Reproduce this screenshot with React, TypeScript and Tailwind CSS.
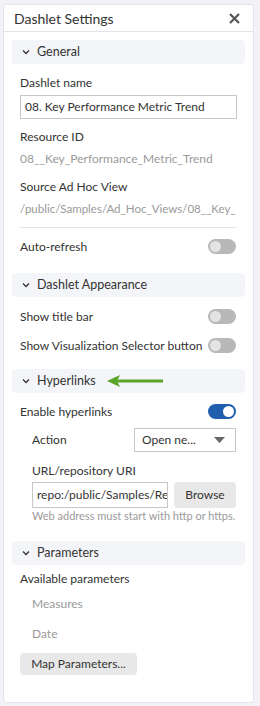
import React from 'react';

const Chevron = () => (
  <svg width="8" height="6" viewBox="0 0 8 6" className="shrink-0">
    <path d="M1 1.5 L4 4.5 L7 1.5" fill="none" stroke="#333" strokeWidth="1.3" />
  </svg>
);

const SectionHeader = ({ title, children }: { title: string; children?: React.ReactNode }) => (
  <div className="mx-2 flex h-6 items-center gap-[7px] rounded-sm bg-[#f4f5f8] pl-[10px] text-[12.5px] text-[#333]">
    <Chevron />
    <span>{title}</span>
    {children}
  </div>
);

const Toggle = ({ on = false }: { on?: boolean }) => (
  <div
    className={
      on
        ? 'flex h-[15px] w-[28px] shrink-0 items-center justify-end rounded-full bg-[#1f5fae] px-[2px]'
        : 'flex h-[15px] w-[28px] shrink-0 items-center justify-start rounded-full bg-[#b8b8b8] px-[2px]'
    }
  >
    <div className={on ? 'h-[11px] w-[11px] rounded-full bg-white' : 'h-[11px] w-[11px] rounded-full bg-[#e4e4e4]'} />
  </div>
);

const Row = ({ label, on }: { label: string; on?: boolean }) => (
  <div className="flex h-[29px] items-center justify-between pl-4 pr-[17px]">
    <span className="whitespace-nowrap">{label}</span>
    <Toggle on={on} />
  </div>
);

export default function App() {
  return (
    <div
      className="min-h-[706px] w-[260px] bg-[#f2f2f8] pt-1 pl-[3px] pr-[6px] pb-[3px] text-[12px] text-[#333]"
      style={{ fontFamily: 'Lato, "Open Sans", sans-serif' }}
    >
      <div className="h-[699px] rounded-[3px] border border-[#e3e4ec] bg-white">
        {/* header */}
        <div className="flex h-[27px] items-center justify-between border-b border-[#e4e5ea] pl-[10px] pr-[13px]">
          <span className="text-[14px]">Dashlet Settings</span>
          <svg width="11" height="11" viewBox="0 0 11 11">
            <path d="M1 1 L10 10 M10 1 L1 10" stroke="#555" strokeWidth="2.2" />
          </svg>
        </div>

        <div className="pt-2">
          <SectionHeader title="General" />
          <div className="px-4 pt-[11px]">
            <div className="leading-[16px]">Dashlet name</div>
            <div className="mt-[4px] flex h-6 items-center whitespace-nowrap border border-[#c8c8c8] px-[4px]">
              08. Key Performance Metric Trend
            </div>
            <div className="mt-[10px] leading-[16px]">Resource ID</div>
            <div className="mt-[6px] leading-[16px] text-[#9a9a9a]">08__Key_Performance_Metric_Trend</div>
            <div className="mt-[12px] leading-[16px]">Source Ad Hoc View</div>
            <div className="mt-[6px] overflow-hidden whitespace-nowrap text-[11.5px] leading-[16px] text-[#9a9a9a]">
              /public/Samples/Ad_Hoc_Views/08__Key_
            </div>
            <div className="mt-[10px] mr-[1px] border-t border-[#e4e4e4]" />
          </div>
          <div className="pt-[4px]">
            <Row label="Auto-refresh" />
          </div>
        </div>

        <div className="pt-[12px]">
          <SectionHeader title="Dashlet Appearance" />
          <div className="pt-[5px]">
            <Row label="Show title bar" />
            <Row label="Show Visualization Selector button" />
          </div>
        </div>

        <div className="pt-[9px]">
          <SectionHeader title="Hyperlinks">
            <svg width="56" height="12" viewBox="0 0 56 12" className="ml-[4px]">
              <path d="M56 6 H10" stroke="#5aa52a" strokeWidth="3" />
              <path d="M0 6 L13 0 L10 6 L13 12 Z" fill="#5aa52a" />
            </svg>
          </SectionHeader>
          <div className="pt-[4px]">
            <Row label="Enable hyperlinks" on />
          </div>
          <div className="pl-7 pr-[17px]">
            <div className="flex h-[28px] items-center justify-between">
              <span>Action</span>
              <div className="flex h-[24px] w-[102px] items-center justify-between border border-[#c8c8c8] pl-[7px] pr-[10px]">
                <span>Open ne...</span>
                <svg width="11" height="6" viewBox="0 0 11 6">
                  <path d="M0 0 H11 L5.5 6 Z" fill="#666" />
                </svg>
              </div>
            </div>
            <div className="mt-[9px] leading-[16px]">URL/repository URI</div>
            <div className="mt-[3px] flex gap-[6px]">
              <div className="flex h-[26px] w-[136px] items-center overflow-hidden whitespace-nowrap border border-[#c8c8c8] px-[4px]">
                repo:/public/Samples/Re
              </div>
              <div className="flex h-[26px] flex-1 items-center justify-center rounded-sm bg-[#e8e8e8]">Browse</div>
            </div>
            <div className="whitespace-nowrap text-[11px] leading-[16px] text-[#9a9a9a]">
              Web address must start with http or https.
            </div>
          </div>
        </div>

        <div className="pt-[17px]">
          <SectionHeader title="Parameters" />
          <div className="pl-4 pt-[6px]">
            <div className="leading-[16px]">Available parameters</div>
            <div className="mt-[9px] pl-3 leading-[16px] text-[#9a9a9a]">Measures</div>
            <div className="mt-[14px] pl-3 leading-[16px] text-[#9a9a9a]">Date</div>
            <div className="mt-[11px] flex h-[22px] w-[117px] items-center justify-center rounded-sm bg-[#e8e8e8]">
              Map Parameters...
            </div>
          </div>
        </div>
      </div>
    </div>
  );
}
